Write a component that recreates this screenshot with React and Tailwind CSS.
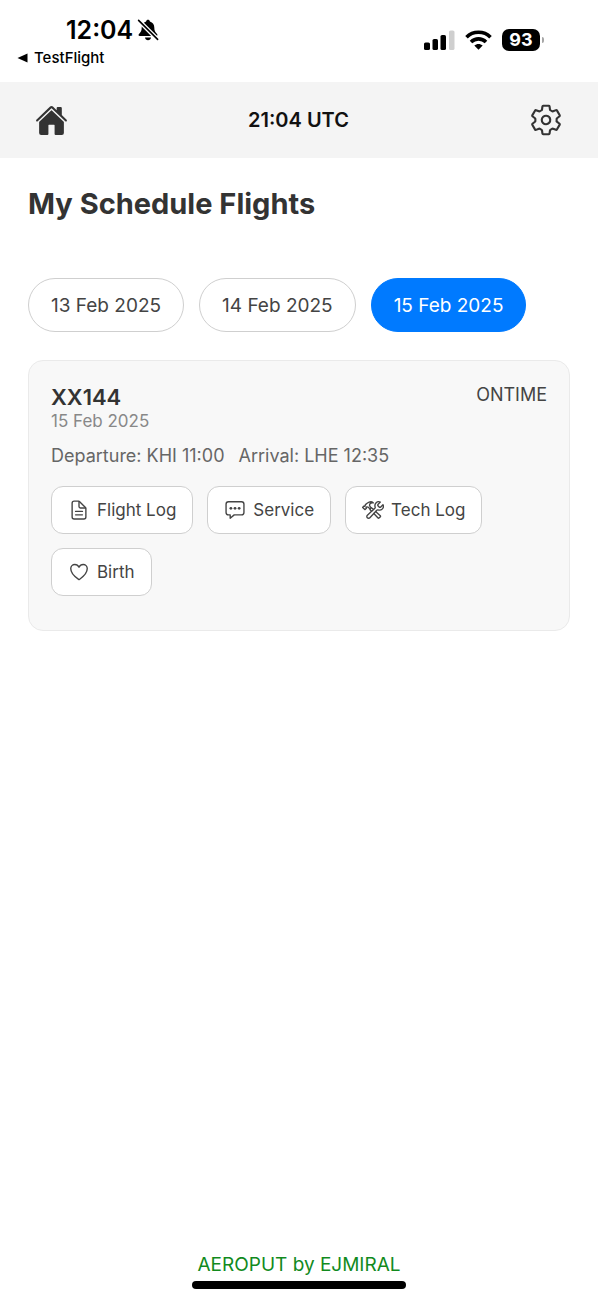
import React, { useState } from 'react';
import {
  IoHome,
  IoSettingsOutline,
  IoDocumentTextOutline,
  IoChatboxEllipsesOutline,
  IoConstructOutline,
  IoHeartOutline,
} from 'react-icons/io5';

const dates = ['13 Feb 2025', '14 Feb 2025', '15 Feb 2025'];

const flight = {
  number: 'XX144',
  date: '15 Feb 2025',
  status: 'ONTIME',
  departure: 'KHI 11:00',
  arrival: 'LHE 12:35',
};

const actions = [
  { label: 'Flight Log', icon: IoDocumentTextOutline },
  { label: 'Service', icon: IoChatboxEllipsesOutline },
  { label: 'Tech Log', icon: IoConstructOutline },
  { label: 'Birth', icon: IoHeartOutline },
];

const StatusBar = () => (
  <div className="h-[82px] flex justify-between items-start pl-4 pr-[54px] text-black">
    <div className="pt-4">
      <div className="flex items-center gap-1 pl-[50px] h-7">
        <span className="text-[25px] leading-7 font-semibold">12:04</span>
        {/* Silent mode bell */}
        <svg className="w-[22px] h-[22px]" viewBox="0 0 22 22" fill="none">
          <path
            d="M11 .8C10 .8 9.3 1.4 9.1 2.4C6.2 3.2 4.7 5.6 4.7 8.6C4.7 12 3.8 13.2 2.2 14.8C1.1 15.9 1.4 17 2.8 17H19.2C20.6 17 20.9 15.9 19.8 14.8C18.2 13.2 17.3 12 17.3 8.6C17.3 5.6 15.8 3.2 12.9 2.4C12.7 1.4 12 .8 11 .8Z"
            fill="currentColor"
          />
          <path d="M8 18.4H14C13.7 20.2 12.6 21.2 11 21.2S8.3 20.2 8 18.4Z" fill="currentColor" />
          <path d="M1.6 1.4L20.6 20.4" stroke="#fff" strokeWidth="4.2" />
          <path d="M1.6 1.4L20.6 20.4" stroke="currentColor" strokeWidth="1.6" strokeLinecap="round" />
        </svg>
      </div>
      <a href="#testflight" className="flex items-center gap-[6px] h-7 text-[15px] leading-7 font-medium">
        <svg className="w-3 h-3" viewBox="0 0 12 12" fill="currentColor">
          <path d="M1.5 6L11.5 1.5V10.5Z" />
        </svg>
        TestFlight
      </a>
    </div>

    <div className="flex items-center gap-[10px] h-20">
      {/* Signal */}
      <svg className="w-[31px] h-[20px]" viewBox="0 0 31 20">
        <rect x="0" y="12.5" width="6" height="7.5" rx="1.6" />
        <rect x="8.5" y="9" width="5.5" height="11" rx="1.6" />
        <rect x="16.5" y="5" width="5.5" height="15" rx="1.6" />
        <rect x="25" y="0.5" width="5.5" height="19.5" rx="1.6" fill="#cfcfcf" />
      </svg>
      {/* Wifi */}
      <svg className="w-[27px] h-[20px]" viewBox="0 0 27 20" fill="none" stroke="currentColor" strokeWidth="3.6">
        <path d="M1.5 7.2C8 0.6 19 0.6 25.5 7.2" />
        <path d="M6 12C10.3 7.8 16.7 7.8 21 12" />
        <path d="M13.5 19.8L9.3 15.6C11.7 13.4 15.3 13.4 17.7 15.6Z" fill="currentColor" stroke="none" />
      </svg>
      {/* Battery */}
      <div className="flex items-center gap-[2px]">
        <span className="w-[38px] h-[22px] rounded-[7px] bg-black text-white text-[18px] leading-[22px] font-bold text-center">93</span>
        <span className="w-[2px] h-[6px] rounded-r-full bg-[#a6a6a6]" />
      </div>
    </div>
  </div>
);

const Header = () => (
  <header className="h-[76px] px-[35px] bg-[#f4f4f4] flex items-center justify-between text-[#333]">
    <button type="button" aria-label="Home">
      <IoHome className="w-[33px] h-[33px]" />
    </button>
    <span className="text-xl font-semibold text-[#111]">21:04 UTC</span>
    <button type="button" aria-label="Settings">
      <IoSettingsOutline className="w-[34px] h-[34px]" />
    </button>
  </header>
);

const FlightCard = ({ flight }) => (
  <article className="mt-7 rounded-[15px] border border-[#eaeaea] bg-[#f8f8f8] px-[22px] pt-[23px] pb-[34px]">
    <div className="flex justify-between items-start">
      <div>
        <h2 className="text-[22px] leading-[26px] font-semibold text-[#333]">{flight.number}</h2>
        <p className="text-[17px] leading-[22px] text-[#888]">{flight.date}</p>
      </div>
      <span className="text-lg leading-[22px] text-[#444]">{flight.status}</span>
    </div>
    <p className="mt-3 text-lg leading-6 text-[#666] flex flex-wrap gap-x-[14px]">
      <span>Departure: {flight.departure}</span>
      <span>Arrival: {flight.arrival}</span>
    </p>
    <div className="mt-[18px] flex flex-wrap gap-[14px]">
      {actions.map(({ label, icon: Icon }) => (
        <button
          key={label}
          type="button"
          className="h-12 px-4 flex items-center gap-[7px] rounded-xl border border-[#cfcfcf] bg-white text-[17px] text-[#444]"
        >
          <Icon className="w-[22px] h-[22px]" />
          <span className="pt-[2px]">{label}</span>
        </button>
      ))}
    </div>
  </article>
);

const App = () => {
  const [selected, setSelected] = useState('15 Feb 2025');

  return (
    <div className="min-h-screen flex flex-col bg-white font-['Inter',sans-serif]">
      <StatusBar />
      <Header />

      <main className="flex-1 px-7 pt-7">
        <h1 className="text-[29px] leading-9 font-bold text-[#333]">My Schedule Flights</h1>

        <div className="mt-14 flex flex-wrap gap-[15px]">
          {dates.map((date) => (
            <button
              key={date}
              type="button"
              onClick={() => setSelected(date)}
              className={`h-[54px] px-[22px] pt-[2px] rounded-full border text-[19px] ${
                selected === date
                  ? 'bg-[#007aff] border-[#007aff] text-white'
                  : 'bg-white border-[#cfcfcf] text-[#444]'
              }`}
            >
              {date}
            </button>
          ))}
        </div>

        <FlightCard flight={flight} />
      </main>

      <footer className="flex flex-col items-center gap-1 pb-[11px]">
        <p className="text-[19px] leading-6 text-[#118a1d]">AEROPUT by EJMIRAL</p>
        <div className="w-[214px] h-[8px] rounded-full bg-black" />
      </footer>
    </div>
  );
};

export default App;
